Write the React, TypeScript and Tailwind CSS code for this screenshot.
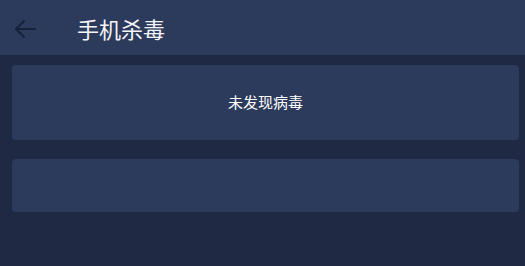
export default function App() {
  return (
    <div
      className="w-[525px] h-[266px] flex flex-col bg-[#1f2944] overflow-hidden"
      style={{ fontFamily: '"Noto Sans CJK SC", "Noto Sans", sans-serif' }}
    >
      {/* Header */}
      <div className="h-[55px] bg-[#2c3a5b] flex items-center shrink-0">
        <svg
          width="22"
          height="20"
          viewBox="0 0 22 20"
          fill="none"
          stroke="#18213a"
          strokeWidth="2"
          strokeLinecap="round"
          strokeLinejoin="round"
          className="ml-[14px] mt-[2px]"
        >
          <path d="M2 10H21" />
          <path d="M10 2L2 10L10 18" />
        </svg>
        <span className="ml-[41px] text-[22px] text-[#f4f5f8] leading-none">手机杀毒</span>
      </div>

      {/* Content */}
      <div className="flex flex-col gap-[19px] pl-3 pr-[6px] pt-[10px]">
        <div className="h-[75px] rounded bg-[#2c3a5b] flex items-center justify-center">
          <span className="text-[15px] text-white">未发现病毒</span>
        </div>
        <div className="h-[53px] rounded bg-[#2c3a5b]" />
      </div>
    </div>
  )
}
